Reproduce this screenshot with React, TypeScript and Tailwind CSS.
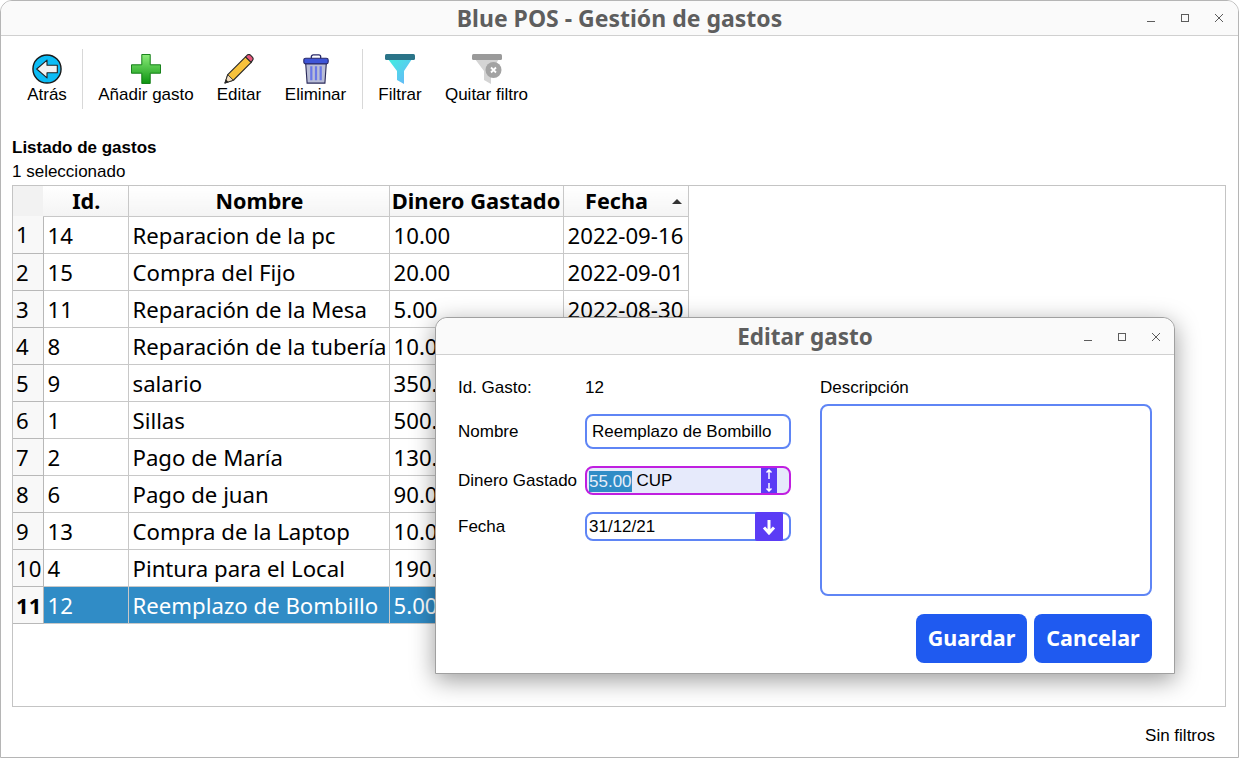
import { ReactNode } from 'react';

const rows = [
  ['1', '14', 'Reparacion de la pc', '10.00', '2022-09-16'],
  ['2', '15', 'Compra del Fijo', '20.00', '2022-09-01'],
  ['3', '11', 'Reparación de la Mesa', '5.00', '2022-08-30'],
  ['4', '8', 'Reparación de la tubería', '10.00', '2022-08-20'],
  ['5', '9', 'salario', '350.00', '2022-08-15'],
  ['6', '1', 'Sillas', '500.00', '2022-08-10'],
  ['7', '2', 'Pago de María', '130.00', '2022-08-05'],
  ['8', '6', 'Pago de juan', '90.00', '2022-07-30'],
  ['9', '13', 'Compra de la Laptop', '10.00', '2022-07-20'],
  ['10', '4', 'Pintura para el Local', '190.00', '2022-06-12'],
  ['11', '12', 'Reemplazo de Bombillo', '5.00', '2021-12-31'],
];

const ubuntu = 'font-["Noto_Sans",sans-serif]';
const headCell = 'p-0 pt-[1px] border-r border-b border-[#c8c8c8] bg-gradient-to-b from-white to-[#f4f4f4]';

function WindowButtons() {
  return (
    <div className="flex items-center gap-[24px] text-[#5c5c5c]">
      <svg width="10" height="10" viewBox="0 0 10 10"><path d="M1 8.500h8" stroke="currentColor" fill="none" /></svg>
      <svg width="10" height="10" viewBox="0 0 10 10"><rect x="1.500" y="1.500" width="7" height="7" stroke="currentColor" fill="none" /></svg>
      <svg width="10" height="10" viewBox="0 0 10 10"><path d="M1 1l8 8M9 1l-8 8" stroke="currentColor" fill="none" /></svg>
    </div>
  );
}

function BackIcon() {
  return (
    <svg width="30" height="30" viewBox="0 0 32 32">
      <circle cx="16" cy="16" r="15" fill="#0cbcf5" stroke="#1a1a1a" strokeWidth="1.500" />
      <path d="M5 16l11-9.500V12h11v8H16v5.500z" fill="#f2f2f2" stroke="#222" strokeWidth="1.200" strokeLinejoin="round" />
    </svg>
  );
}

function PlusIcon() {
  return (
    <svg width="30" height="30" viewBox="0 0 32 32">
      <defs>
        <linearGradient id="plusg" x1="0" y1="0" x2="0" y2="1">
          <stop offset="0" stopColor="#8cec7a" />
          <stop offset="1" stopColor="#0c9410" />
        </linearGradient>
      </defs>
      <path d="M11.500.5h9v11h11v9h-11v11h-9v-11H.5v-9h11z" fill="url(#plusg)" stroke="#0c7a10" />
    </svg>
  );
}

function PencilIcon() {
  return (
    <svg width="30" height="30" viewBox="0 0 32 32">
      <path d="M1 31l3-9L23 3l6 6L10 28z" fill="#f7c23c" stroke="#2b2b2b" strokeWidth="1.200" strokeLinejoin="round" />
      <path d="M23 3l2-2c1-.8 2-.8 3 0l2.500 2.500c.8 1 .8 2 0 3L29 9z" fill="#e8577c" stroke="#2b2b2b" strokeWidth="1.200" />
      <path d="M1 31l3-9 6 6z" fill="#f3dfc0" stroke="#2b2b2b" strokeWidth="1" />
      <path d="M1 31l1.200-3.800 2.600 2.600z" fill="#222" />
    </svg>
  );
}

function TrashIcon() {
  return (
    <svg width="30" height="30" viewBox="0 0 32 32">
      <path d="M11 5V3c0-1 1-2 2-2h6c1 0 2 1 2 2v2" fill="none" stroke="#2b2b6b" strokeWidth="1.400" />
      <path d="M5 10h22l-1.500 21H6.500z" fill="#b9bdd6" stroke="#2b2b5b" strokeWidth="1.200" />
      <rect x="3" y="4.500" width="26" height="6" rx="2" fill="#3e55d8" stroke="#2b2b6b" strokeWidth="1.200" />
      <path d="M11 13v15M16 13v15M21 13v15" stroke="#6a78e8" strokeWidth="2.400" />
    </svg>
  );
}

function FunnelIcon() {
  return (
    <svg width="30" height="30" viewBox="0 0 30 30">
      <defs>
        <linearGradient id="fung" x1="0" y1="0" x2="1" y2="1">
          <stop offset="0" stopColor="#3ff0df" />
          <stop offset="1" stopColor="#6cb0fb" />
        </linearGradient>
      </defs>
      <path d="M3 5h24L19 17v13l-7-4V17z" fill="url(#fung)" />
      <rect x="0" y="0" width="30" height="6" rx="1.500" fill="#2a7488" />
    </svg>
  );
}

function FunnelOffIcon() {
  return (
    <svg width="30" height="30" viewBox="0 0 30 30">
      <path d="M3 5h24L19 17v13l-7-4V17z" fill="#d4d4d4" />
      <rect x="0" y="0" width="30" height="6" rx="1.500" fill="#9a9a9a" />
      <circle cx="21.500" cy="16" r="8" fill="#a3a3a3" />
      <path d="M19 13.500l5 5M24 13.500l-5 5" stroke="#fff" strokeWidth="1.800" />
    </svg>
  );
}

function ToolButton({ icon, label, w }: { icon: ReactNode; label: string; w: string }) {
  return (
    <div className={`flex flex-col items-center pt-[5px] h-full ${w}`}>
      <div className="h-[30px] flex items-center">{icon}</div>
      <span className="mt-[1px] leading-[19px] whitespace-nowrap">{label}</span>
    </div>
  );
}

export default function App() {
  return (
    <div className='relative w-[1239px] h-[758px] overflow-hidden bg-white font-["Liberation_Sans",sans-serif] text-[17px] text-black'>
      <div className="flex flex-col h-full border border-[#b5b5b5] rounded-t-[12px] overflow-hidden">
        <div className="h-[35px] shrink-0 flex items-center bg-[#fafafa] border-b border-[#d0d0d0] relative">
          <div className={`flex-1 text-center text-[23px] font-bold text-[#5e5e5e] ${ubuntu}`}>Blue POS - Gestión de gastos</div>
          <div className="absolute right-[14px] top-[12px]"><WindowButtons /></div>
        </div>

        <div className="h-[73px] shrink-0 pt-[13px] pl-[11px]">
          <div className="flex items-start h-[60px]">
            <ToolButton icon={<BackIcon />} label="Atrás" w="w-[70px]" />
            <div className="w-px h-[60px] bg-[#d8d8d8]" />
            <ToolButton icon={<PlusIcon />} label="Añadir gasto" w="w-[126px]" />
            <ToolButton icon={<PencilIcon />} label="Editar" w="w-[60px]" />
            <ToolButton icon={<TrashIcon />} label="Eliminar" w="w-[93px]" />
            <div className="w-px h-[60px] bg-[#d8d8d8]" />
            <ToolButton icon={<FunnelIcon />} label="Filtrar" w="w-[74px]" />
            <ToolButton icon={<FunnelOffIcon />} label="Quitar filtro" w="w-[99px]" />
          </div>
        </div>

        <div className="flex flex-col flex-1 pl-[11px] pr-[12px] min-h-0">
          <div className="mt-[29px] font-bold leading-[19px]">Listado de gastos</div>
          <div className="mt-[5px] leading-[19px]">1 seleccionado</div>
          <div className="mt-[4px] h-[522px] shrink-0 border border-[#c4c4c4] overflow-hidden">
            <table className={`table-fixed w-[675px] border-collapse text-[22.2px] leading-[28px] ${ubuntu}`}>
              <thead>
                <tr className="h-[30px] text-center font-bold text-[21.600px]">
                  <th className="w-[30px] p-0 bg-[#f2f2f2]" />
                  <th className={`w-[85px] pl-[2px] ${headCell}`}>Id.</th>
                  <th className={`w-[261px] pl-[2px] ${headCell}`}>Nombre</th>
                  <th className={`w-[174px] whitespace-nowrap text-[21.900px] ${headCell}`}>Dinero Gastado</th>
                  <th className={`w-[125px] relative pr-[18px] ${headCell}`}>
                    Fecha
                    <span className="absolute right-[6px] top-[13px] w-0 h-0 border-x-[5px] border-x-transparent border-b-[5px] border-b-[#333]" />
                  </th>
                </tr>
              </thead>
              <tbody>
                {rows.map((r, i) => {
                  const selected = i === rows.length - 1;
                  return (
                    <tr key={r[0]} className="h-[37px]">
                      <td className={`p-0 pt-[2px] pl-[3px] border-r border-b border-[#b8b8b8] bg-[#f8f8f8] ${selected ? 'font-bold' : ''}`}>{r[0]}</td>
                      {r.slice(1).map((c, j) => (
                        <td key={j} className={`p-0 pt-[2px] pl-[4px] border-r border-b border-[#c8c8c8] whitespace-nowrap overflow-hidden ${selected ? 'bg-[#308cc6] text-white' : ''}`}>{c}</td>
                      ))}
                    </tr>
                  );
                })}
              </tbody>
            </table>
          </div>
          <div className="mt-[19px] text-right pr-[11px] leading-[19px]">Sin filtros</div>
        </div>
      </div>

      <div className="absolute left-[435px] top-[317px] w-[740px] h-[357px] flex flex-col bg-white border border-[#a0a0a0] rounded-t-[12px] shadow-[0_6px_24px_rgba(0,0,0,0.4)]">
        <div className="h-[37px] shrink-0 relative flex items-center justify-center bg-[#fafafa] rounded-t-[12px] border-b border-[#d0d0d0] pt-[1px]">
          <span className={`text-[22.500px] font-bold text-[#5e5e5e] ${ubuntu}`}>Editar gasto</span>
          <div className="absolute right-[13px] top-[14px]"><WindowButtons /></div>
        </div>
        <div className="flex flex-1 pl-[22px] pr-[22px]">
          <div className="w-[333px] grid grid-cols-[127px_206px] grid-rows-[37px_52px_45px_47px] pt-[14px] content-start">
            <span className="self-center">Id. Gasto:</span>
            <span className="self-center">12</span>
            <span className="self-center">Nombre</span>
            <div className="self-center h-[35px] mb-[1px] border-2 border-[#5f85f5] rounded-[8px] flex items-center pl-[5px] pt-[1px]">Reemplazo de Bombillo</div>
            <span className="self-center">Dinero Gastado</span>
            <div className="self-center h-[29px] border-2 border-[#c01fe0] rounded-[8px] bg-[#e6eafb] flex items-center pl-[2px]">
              <span className="bg-[#308cc6] text-[#e8eefa] leading-[21px] mt-[1px]">55.00</span>
              <span className="ml-[5px] flex-1 mt-[1px]">CUP</span>
              <div className="w-[16px] h-full mr-[12px] bg-[#5b3cf5] flex flex-col items-center justify-between py-[1px]">
                <svg width="8" height="11" viewBox="0 0 8 11"><path d="M4 10V1M1.500 3.500L4 1l2.500 2.500" stroke="#fff" strokeWidth="1.500" fill="none" /></svg>
                <svg width="8" height="9" viewBox="0 0 8 9"><path d="M4 0v8M1.500 5.500L4 8l2.500-2.500" stroke="#fff" strokeWidth="1.500" fill="none" /></svg>
              </div>
            </div>
            <span className="self-center">Fecha</span>
            <div className="self-center h-[29px] border-2 border-[#5f85f5] rounded-[8px] flex items-center pl-[2px]">
              <span className="flex-1 mt-[1px]">31/12/21</span>
              <div className="w-[28px] h-[29px] mr-[6px] bg-[#5b3cf5] rounded-[2px] flex items-center justify-center">
                <svg width="14" height="16" viewBox="0 0 14 16"><path d="M7 1v13M2 8.500l5 5.500 5-5.500" stroke="#fff" strokeWidth="3" fill="none" /></svg>
              </div>
            </div>
          </div>
          <div className="flex-1 flex flex-col ml-[29px] pt-[23px]">
            <span className="leading-[19px]">Descripción</span>
            <div className="mt-[7px] h-[192px] w-[332px] border-2 border-[#5f85f5] rounded-[8px]" />
            <div className="mt-[18px] flex justify-end gap-[7px]">
              <button className={`w-[111px] h-[49px] rounded-[8px] bg-[#1f5af0] text-white text-[21.500px] font-bold ${ubuntu}`}>Guardar</button>
              <button className={`w-[118px] h-[49px] rounded-[8px] bg-[#1f5af0] text-white text-[21.500px] font-bold ${ubuntu}`}>Cancelar</button>
            </div>
          </div>
        </div>
      </div>
    </div>
  );
}
